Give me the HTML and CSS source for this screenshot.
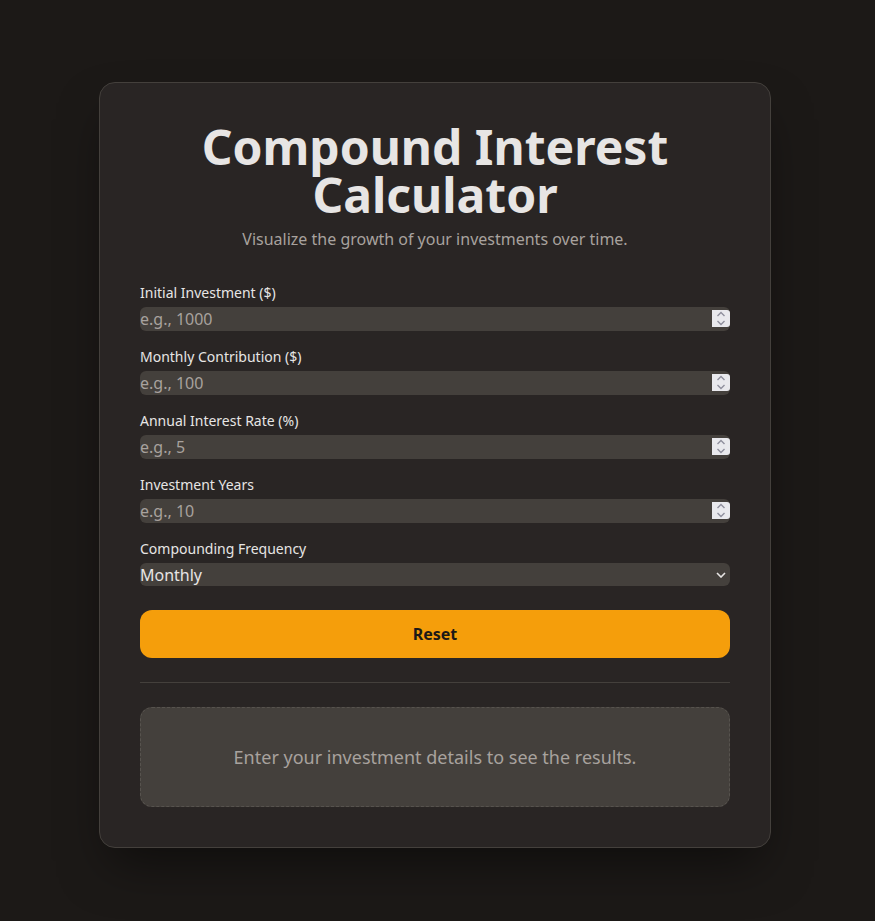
FILE: index.html
```html
<!DOCTYPE html>
<html lang="en">
<head>
<meta charset="utf-8">
<title>Compound Interest Calculator</title>
<link rel="stylesheet" href="styles.css">
</head>
<body>
<main class="card">
  <header class="head">
    <h1 class="title">Compound Interest Calculator</h1>
    <p class="subtitle">Visualize the growth of your investments over time.</p>
  </header>
  <form class="form">
    <div class="field">
      <label class="label" for="initial">Initial Investment ($)</label>
      <div class="control">
        <input class="input" id="initial" type="number" placeholder="e.g., 1000">
        <span class="spin"><svg width="10" height="15" viewBox="0 0 10 15"><path d="M1.5 5 L5 1.5 L8.5 5 M1.5 10 L5 13.5 L8.5 10" fill="none" stroke="#8f8f9d" stroke-width="1.4"/></svg></span>
      </div>
    </div>
    <div class="field">
      <label class="label" for="monthly">Monthly Contribution ($)</label>
      <div class="control">
        <input class="input" id="monthly" type="number" placeholder="e.g., 100">
        <span class="spin"><svg width="10" height="15" viewBox="0 0 10 15"><path d="M1.5 5 L5 1.5 L8.5 5 M1.5 10 L5 13.5 L8.5 10" fill="none" stroke="#8f8f9d" stroke-width="1.4"/></svg></span>
      </div>
    </div>
    <div class="field">
      <label class="label" for="rate">Annual Interest Rate (%)</label>
      <div class="control">
        <input class="input" id="rate" type="number" placeholder="e.g., 5">
        <span class="spin"><svg width="10" height="15" viewBox="0 0 10 15"><path d="M1.5 5 L5 1.5 L8.5 5 M1.5 10 L5 13.5 L8.5 10" fill="none" stroke="#8f8f9d" stroke-width="1.4"/></svg></span>
      </div>
    </div>
    <div class="field">
      <label class="label" for="years">Investment Years</label>
      <div class="control">
        <input class="input" id="years" type="number" placeholder="e.g., 10">
        <span class="spin"><svg width="10" height="15" viewBox="0 0 10 15"><path d="M1.5 5 L5 1.5 L8.5 5 M1.5 10 L5 13.5 L8.5 10" fill="none" stroke="#8f8f9d" stroke-width="1.4"/></svg></span>
      </div>
    </div>
    <div class="field">
      <label class="label" for="freq">Compounding Frequency</label>
      <div class="control">
        <select class="select" id="freq">
          <option>Annually</option>
          <option>Quarterly</option>
          <option selected>Monthly</option>
          <option>Daily</option>
        </select>
        <svg class="chev" width="10" height="6" viewBox="0 0 10 6"><path d="M1 1 L5 5 L9 1" fill="none" stroke="#e7e5e4" stroke-width="1.6"/></svg>
      </div>
    </div>
    <button class="btn" type="reset">Reset</button>
  </form>
  <hr class="divider">
  <div class="results">Enter your investment details to see the results.</div>
</main>
</body>
</html>
```
FILE: styles.css
```css
* { box-sizing: border-box; }
html, body { margin: 0; padding: 0; }
body {
  background: #1c1917;
  font-family: "Noto Sans", sans-serif;
  color: #e7e5e4;
  padding-top: 82px;
  min-height: 921px;
}
.card {
  width: 672px;
  margin-left: 99px;
  background: #292524;
  border: 1px solid #44403c;
  border-radius: 16px;
  padding: 40px;
  box-shadow: 0 25px 50px -12px rgba(0,0,0,0.5);
}
.head { text-align: center; }
.title {
  margin: 0;
  font-size: 48px;
  line-height: 48px;
  font-weight: 700;
  color: #e7e5e4;
}
.subtitle {
  margin: 8px 0 0;
  font-size: 16px;
  line-height: 24px;
  color: #a8a29e;
}
.form {
  margin-top: 32px;
  display: flex;
  flex-direction: column;
  gap: 16px;
}
.field { display: flex; flex-direction: column; gap: 4px; }
.label {
  font-size: 14px;
  line-height: 20px;
  color: #e7e5e4;
}
.control { position: relative; display: flex; }
.input, .select {
  display: block;
  width: 100%;
  height: 24px;
  border: none;
  border-radius: 6px;
  background: #44403c;
  color: #e7e5e4;
  font-family: "Noto Sans", sans-serif;
  font-size: 16px;
  line-height: 24px;
  padding: 0;
  margin: 0;
  outline: none;
}
.input { -moz-appearance: textfield; }
.input::placeholder { color: #a8a29e; }
.input::-webkit-inner-spin-button,
.input::-webkit-outer-spin-button { -webkit-appearance: none; margin: 0; }
.spin {
  position: absolute;
  right: 0;
  top: 3px;
  width: 18px;
  height: 17px;
  background: #e9e9ed;
  border-radius: 0 3px 3px 0;
  display: flex;
  align-items: center;
  justify-content: center;
  pointer-events: none;
}
.select {
  height: 23px;
  -webkit-appearance: none;
  appearance: none;
}
.chev {
  position: absolute;
  right: 4px;
  top: 9px;
  pointer-events: none;
}
.btn {
  margin-top: 8px;
  height: 48px;
  border: none;
  border-radius: 12px;
  background: #f59e0b;
  color: #1c1917;
  font-family: "Noto Sans", sans-serif;
  font-size: 16px;
  font-weight: 700;
  cursor: pointer;
}
.divider {
  margin: 24px 0;
  border: none;
  border-top: 1px solid #44403c;
}
.results {
  border: 1px dashed #57534e;
  border-radius: 12px;
  background: #44403c;
  color: #a8a29e;
  text-align: center;
  font-size: 18px;
  line-height: 28px;
  padding: 35px 16px;
}
```
